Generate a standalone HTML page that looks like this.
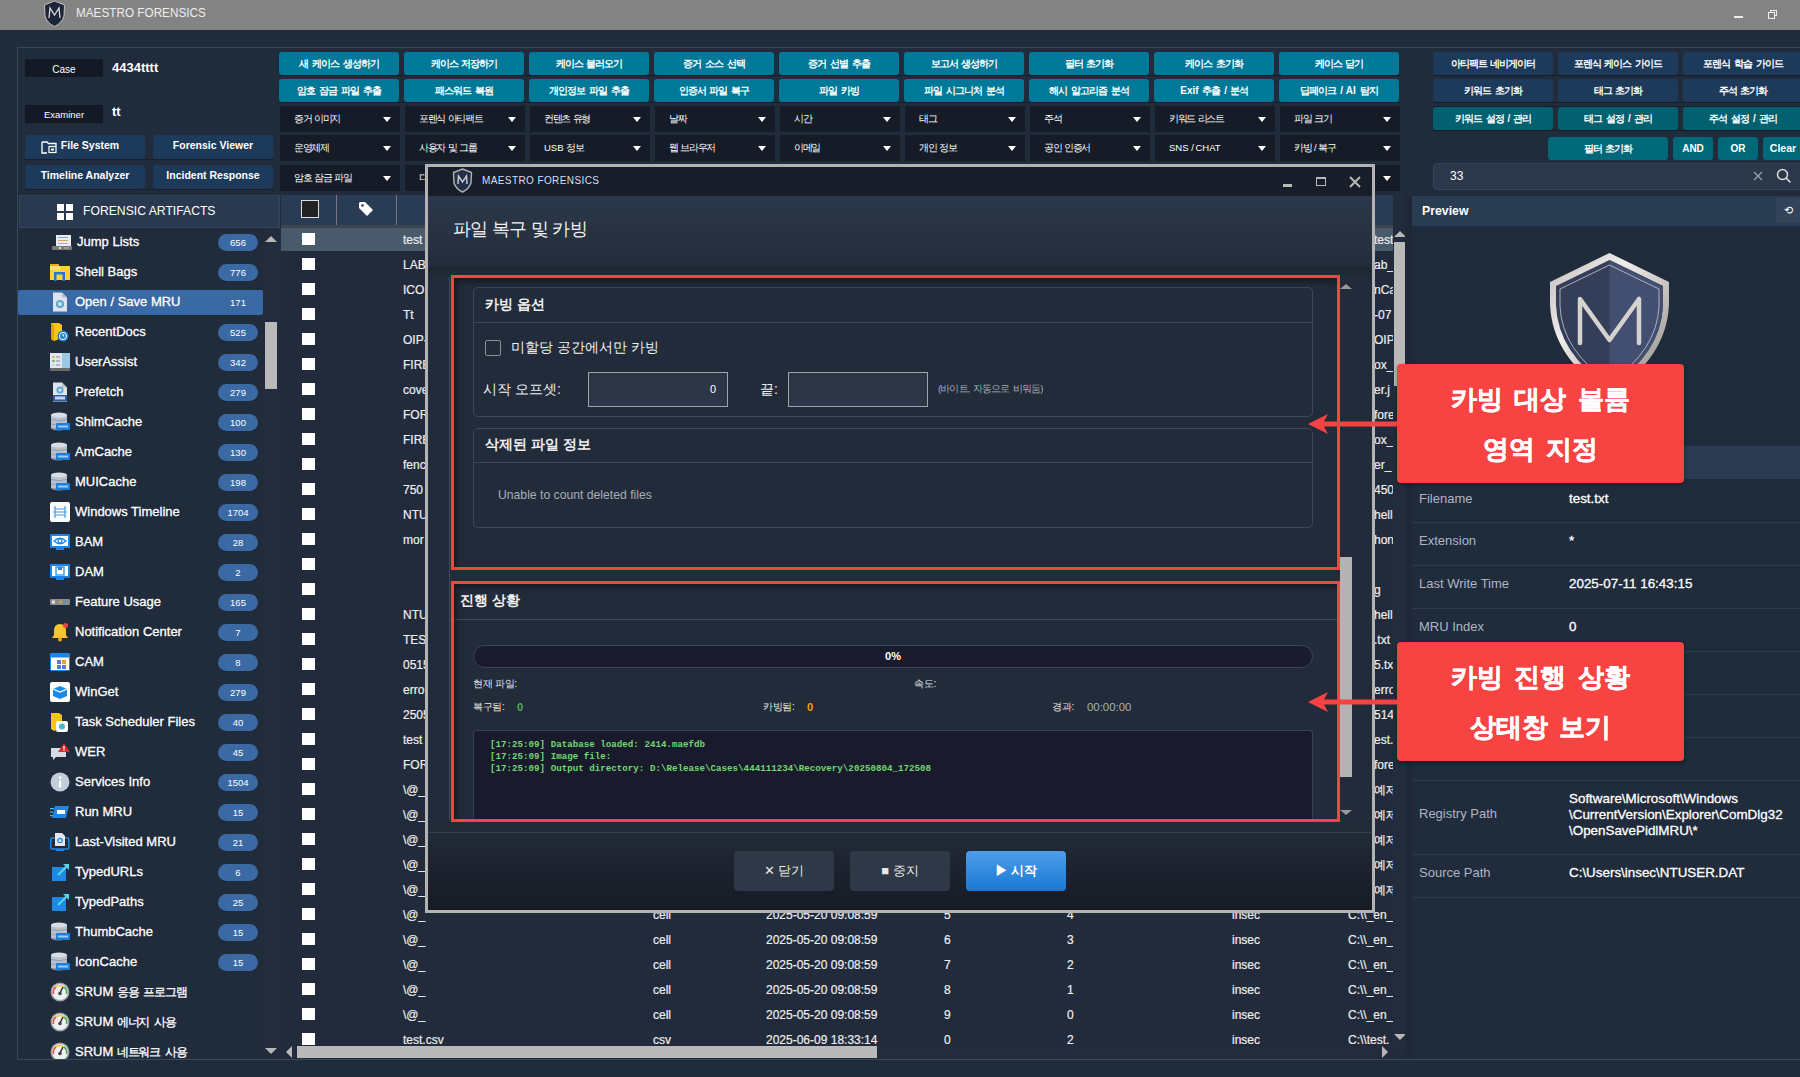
<!DOCTYPE html><html><head><meta charset="utf-8"><style>
*{box-sizing:border-box;margin:0;padding:0}
html,body{width:1800px;height:1077px;overflow:hidden;background:#202b3b;font-family:"Liberation Sans",sans-serif;color:#fff;position:relative}
.a{position:absolute}
.tb{position:absolute;width:120px;height:23px;background:#007999;border-radius:3px;color:#fff;font-weight:bold;font-size:10px;letter-spacing:-1px;word-spacing:2px;text-align:center;line-height:23px;white-space:nowrap}
.nb{background:#1e3a5b}
.db{background:#03606f}
.dd{position:absolute;width:120px;height:26px;background:#151b27;color:#fff;font-size:9.5px;letter-spacing:-1.35px;word-spacing:1.5px;line-height:26px;padding-left:14px;white-space:nowrap}
.dd:after{content:"";position:absolute;right:9px;top:11px;border-left:4px solid transparent;border-right:4px solid transparent;border-top:5px solid #fff}
.it{position:absolute;left:52px;width:215px;height:30px}
.it .ic{position:absolute;left:-2px;top:5px;width:20px;height:20px}
.it .tx{position:absolute;left:23px;top:0;line-height:30px;font-size:13px;color:#fff;white-space:nowrap;-webkit-text-stroke:0.3px #fff}
.it .bd{position:absolute;left:166px;top:7px;width:40px;height:17px;border-radius:9px;background:#3a69a4;color:#fff;font-size:9.5px;text-align:center;line-height:17px}
.row{position:absolute;left:281px;width:1112px;height:25px;font-size:12px;color:#eee;-webkit-text-stroke:0.2px #eee;white-space:nowrap;overflow:hidden}
.row .cb{position:absolute;left:21px;top:5px;width:13px;height:12px;background:#fff}
.row span{position:absolute;top:0;line-height:25px}
.pl{position:absolute;left:1419px;font-size:13px;color:#aeb6c2;white-space:nowrap}
.pv{position:absolute;left:1569px;font-size:13.4px;color:#fff;-webkit-text-stroke:0.3px #fff;white-space:nowrap}
.ps{position:absolute;left:1412px;width:388px;height:1px;background:#2f3a4a}
.grp{position:absolute;border:1px solid #3a4859;border-radius:5px}
.grp .hl{position:absolute;left:0;right:0;height:1px;background:#3a4859}
.kr{font-size:14px;color:#f0f0f0;white-space:nowrap}
.btn{position:absolute;height:40px;width:100px;border-radius:4px;background:#2e3846;font-size:13px;color:#e8e8e8;text-align:center;line-height:40px}
.callout{position:absolute;left:1397px;width:287px;height:119px;background:#f84343;border-radius:4px;box-shadow:0 2px 4px rgba(0,0,0,.35);color:#fff;font-weight:bold;-webkit-text-stroke:0.45px #fff;font-size:26px;text-align:center;word-spacing:4px}
</style></head><body>
<div class="a" style="left:0;top:0;width:1800px;height:30px;background:#838383"></div>
<svg class="a" style="left:43px;top:0" width="23" height="27" viewBox="0 0 23 27"><path d="M11.5 1 L21.5 5 L21 16 Q19 23 11.5 26.5 Q4 23 2 16 L1.5 5 Z" fill="#1b2638" stroke="#c9c4bc" stroke-width="1"/><path d="M6 18 L7 8 L11.5 15 L16 8 L17 18" fill="none" stroke="#d8d8d8" stroke-width="1.3"/></svg>
<div class="a" style="left:76px;top:5px;font-size:12.3px;letter-spacing:0px;transform:scaleX(0.955);transform-origin:0 0;color:#eee;line-height:16px">MAESTRO FORENSICS</div>
<div class="a" style="left:1734px;top:16px;width:9px;height:2px;background:#eee"></div>
<div class="a" style="left:1770px;top:10px;width:7px;height:6px;border:1px solid #eee"></div>
<div class="a" style="left:1768px;top:12px;width:7px;height:7px;border:1px solid #eee;background:#838383"></div>
<div class="a" style="left:17px;top:47px;width:1800px;height:1013px;border:1px solid #38475a"></div>
<div class="a" style="left:25px;top:59px;width:78px;height:18px;background:#131a26;font-size:10px;text-align:center;line-height:21px">Case</div>
<div class="a" style="left:112px;top:59px;font-size:13px;font-weight:bold;line-height:18px">4434tttt</div>
<div class="a" style="left:25px;top:105px;width:78px;height:18px;background:#131a26;font-size:9.5px;text-align:center;line-height:19.5px">Examiner</div>
<div class="a" style="left:112px;top:103px;font-size:13px;font-weight:bold;line-height:18px">tt</div>
<div class="tb nb" style="left:25px;top:135px;height:24px;line-height:21px;letter-spacing:0;word-spacing:0;font-size:10.5px;padding-left:10px;">File System</div>
<div class="tb nb" style="left:153px;top:135px;height:24px;line-height:21px;letter-spacing:0;word-spacing:0;font-size:10.5px;">Forensic Viewer</div>
<div class="tb nb" style="left:25px;top:165px;height:24px;line-height:21px;letter-spacing:0;word-spacing:0;font-size:10.5px;">Timeline Analyzer</div>
<div class="tb nb" style="left:153px;top:165px;height:24px;line-height:21px;letter-spacing:0;word-spacing:0;font-size:10.5px;">Incident Response</div>
<svg class="a" style="left:41px;top:140px" width="16" height="14" viewBox="0 0 16 14"><path d="M1 2 H6 L7.5 3.5 H15 V6" fill="none" stroke="#fff" stroke-width="1.3"/><path d="M1 2 V13 H6" fill="none" stroke="#fff" stroke-width="1.3"/><rect x="8" y="6.5" width="7" height="6" fill="none" stroke="#fff" stroke-width="1.2"/><rect x="10" y="8.5" width="3" height="2" fill="#fff"/></svg>
<div class="a" style="left:25px;top:159px;width:248px;height:1px;background:#181d28"></div>
<div class="a" style="left:25px;top:189px;width:248px;height:1px;background:#181d28"></div>
<div class="a" style="left:279px;top:75px;width:1121px;height:1px;background:#181d28"></div>
<div class="a" style="left:279px;top:102px;width:1121px;height:1px;background:#181d28"></div>
<div class="a" style="left:1433px;top:75px;width:367px;height:1px;background:#181d28"></div>
<div class="a" style="left:1433px;top:102px;width:367px;height:1px;background:#181d28"></div>
<div class="a" style="left:1433px;top:106px;width:367px;height:1px;background:#181d28"></div>
<div class="a" style="left:1433px;top:130px;width:367px;height:1px;background:#181d28"></div>
<div class="a" style="left:19px;top:195px;width:261px;height:33px;background:#293a50;border:1px solid #33455c"></div>
<svg class="a" style="left:57px;top:204px" width="16" height="16"><rect x="0" y="0" width="7" height="7" fill="#fff"/><rect x="9" y="0" width="7" height="7" fill="#fff"/><rect x="0" y="9" width="7" height="7" fill="#fff"/><rect x="9" y="9" width="7" height="7" fill="#fff"/></svg>
<div class="a" style="left:83px;top:203px;font-size:12.2px;line-height:17px">FORENSIC ARTIFACTS</div>
<div class="a" style="left:18px;top:290px;width:245px;height:25px;background:#3a6aa5;border-radius:2px"></div>
<div class="a" style="left:18px;top:229px;width:247px;height:830px;overflow:hidden">
<div class="it jl" style="left:34px;top:-2px"><svg class="ic" style="left:0;top:7px" viewBox="0 0 20 20" width="20" height="20"><rect x="4" y="1" width="15" height="11" fill="#e9ecf2"/><rect x="6" y="3" width="10" height="1" fill="#8ab"/><rect x="6" y="6" width="10" height="1" fill="#e8a060"/><rect x="6" y="9" width="10" height="1" fill="#aab"/><rect x="0" y="12" width="20" height="4" fill="#7a7a7a"/><rect x="7" y="13" width="2" height="2" fill="#ddd"/><rect x="12" y="13.5" width="5" height="1" fill="#bbb"/></svg><style>.jl .tx{left:25px}</style><div class="tx">Jump Lists</div><div class="bd">656</div></div>
<div class="it" style="left:34px;top:28px"><svg class="ic" viewBox="0 0 20 20" width="20" height="20"><rect x="0" y="2" width="9" height="4" fill="#e8b400"/><rect x="0" y="4" width="20" height="14" fill="#fad232"/><rect x="0" y="4" width="10" height="4" fill="#fbe07a"/><path d="M4 19 V10 H15 V19 H12.5 V12.5 H6.5 V19 Z" fill="#1e78e0"/></svg><div class="tx">Shell Bags</div><div class="bd">776</div></div>
<div class="it" style="left:34px;top:58px"><svg class="ic" viewBox="0 0 20 20" width="20" height="20"><path d="M3 0.5 H12 L17 5.5 V19.5 H3 Z" fill="#dfe4ea"/><path d="M12 0.5 V5.5 H17 Z" fill="#b5c0cc"/><circle cx="10" cy="12" r="3" fill="none" stroke="#5aaad8" stroke-width="2.2"/></svg><div class="tx">Open / Save MRU</div><div class="bd">171</div></div>
<div class="it" style="left:34px;top:88px"><svg class="ic" viewBox="0 0 20 20" width="20" height="20"><path d="M1 1 H9 L12 3 V16 L4 19 L1 17 Z" fill="#f5c518"/><path d="M1 1 L4 3 V19 L1 17 Z" fill="#d9a800"/><circle cx="13" cy="14" r="5.5" fill="#1a7fd6"/><circle cx="13" cy="14" r="3.6" fill="none" stroke="#fff" stroke-width="1"/><path d="M13 12 V14 H14.5" stroke="#fff" stroke-width="1" fill="none"/></svg><div class="tx">RecentDocs</div><div class="bd">525</div></div>
<div class="it" style="left:34px;top:118px"><svg class="ic" viewBox="0 0 20 20" width="20" height="20"><rect x="0" y="1" width="20" height="18" fill="#e2e8ef"/><rect x="12" y="1" width="8" height="15" fill="#9ec7e4"/><rect x="0" y="16" width="20" height="3" fill="#6a6a6a"/><rect x="2.5" y="4" width="2" height="2" fill="#f0a020"/><rect x="2.5" y="8" width="2" height="2" fill="#3cb043"/><rect x="2.5" y="12" width="2" height="2" fill="#ccc"/><rect x="6" y="4.5" width="4" height="1" fill="#889"/><rect x="6" y="8.5" width="4" height="1" fill="#889"/><rect x="6" y="12.5" width="4" height="1" fill="#889"/></svg><div class="tx">UserAssist</div><div class="bd">342</div></div>
<div class="it" style="left:34px;top:148px"><svg class="ic" viewBox="0 0 20 20" width="20" height="20"><path d="M3 0.5 H12 L17 5.5 V19.5 H3 Z" fill="#dfe4ea"/><path d="M12 0.5 V5.5 H17 Z" fill="#b5c0cc"/><circle cx="10" cy="8" r="2.6" fill="none" stroke="#5aaad8" stroke-width="2"/><rect x="3" y="13" width="14" height="6" fill="#2a59ad"/><rect x="5" y="14.5" width="10" height="3" fill="#c6d6f2"/></svg><div class="tx">Prefetch</div><div class="bd">279</div></div>
<div class="it" style="left:34px;top:178px"><svg class="ic" viewBox="0 0 20 20" width="20" height="20"><ellipse cx="9" cy="16" rx="8" ry="2.5" fill="#8e94a3"/><rect x="1" y="3" width="16" height="13" fill="#b9bfcc"/><path d="M1 7.5 Q9 10 17 7.5 M1 12 Q9 14.5 17 12" stroke="#8e94a3" stroke-width="0.8" fill="none"/><ellipse cx="9" cy="3" rx="8" ry="2.5" fill="#d9dde6"/><rect x="6" y="11" width="14" height="7" rx="1" fill="#1c7fdc"/><rect x="8" y="13.5" width="10" height="2" fill="#bfe0ff" opacity=".8"/></svg><div class="tx">ShimCache</div><div class="bd">100</div></div>
<div class="it" style="left:34px;top:208px"><svg class="ic" viewBox="0 0 20 20" width="20" height="20"><ellipse cx="9" cy="16" rx="8" ry="2.5" fill="#8e94a3"/><rect x="1" y="3" width="16" height="13" fill="#b9bfcc"/><path d="M1 7.5 Q9 10 17 7.5 M1 12 Q9 14.5 17 12" stroke="#8e94a3" stroke-width="0.8" fill="none"/><ellipse cx="9" cy="3" rx="8" ry="2.5" fill="#d9dde6"/><rect x="6" y="11" width="14" height="7" rx="1" fill="#1c7fdc"/><rect x="8" y="13.5" width="10" height="2" fill="#bfe0ff" opacity=".8"/></svg><div class="tx">AmCache</div><div class="bd">130</div></div>
<div class="it" style="left:34px;top:238px"><svg class="ic" viewBox="0 0 20 20" width="20" height="20"><ellipse cx="9" cy="16" rx="8" ry="2.5" fill="#8e94a3"/><rect x="1" y="3" width="16" height="13" fill="#b9bfcc"/><path d="M1 7.5 Q9 10 17 7.5 M1 12 Q9 14.5 17 12" stroke="#8e94a3" stroke-width="0.8" fill="none"/><ellipse cx="9" cy="3" rx="8" ry="2.5" fill="#d9dde6"/><rect x="6" y="11" width="14" height="7" rx="1" fill="#1c7fdc"/><rect x="8" y="13.5" width="10" height="2" fill="#bfe0ff" opacity=".8"/></svg><div class="tx">MUICache</div><div class="bd">198</div></div>
<div class="it" style="left:34px;top:268px"><svg class="ic" viewBox="0 0 20 20" width="20" height="20"><rect x="0" y="0" width="20" height="20" rx="2" fill="#fdfdfd"/><path d="M5 4 V16 M15 4 V16 M5 7 H15 M5 13 H15 M3 10 H17" stroke="#4a9be0" stroke-width="1.2"/></svg><div class="tx">Windows Timeline</div><div class="bd">1704</div></div>
<div class="it" style="left:34px;top:298px"><svg class="ic" viewBox="0 0 20 20" width="20" height="20"><rect x="0" y="2" width="20" height="14" rx="1" fill="#1c86e8"/><rect x="2" y="4" width="16" height="10" fill="#fff"/><path d="M4 9 Q10 3.5 16 9 Q10 14.5 4 9 Z" fill="none" stroke="#1c86e8" stroke-width="1.2"/><circle cx="10" cy="9" r="2" fill="none" stroke="#1c86e8" stroke-width="1.2"/><rect x="6" y="16" width="8" height="2" fill="#1c86e8"/></svg><div class="tx">BAM</div><div class="bd">28</div></div>
<div class="it" style="left:34px;top:328px"><svg class="ic" viewBox="0 0 20 20" width="20" height="20"><rect x="0" y="2" width="20" height="14" rx="1" fill="#1c86e8"/><rect x="2" y="4" width="16" height="10" fill="#fff"/><rect x="6" y="5" width="8" height="8" fill="none" stroke="#1c86e8" stroke-width="1.2"/><rect x="8" y="5" width="4" height="3" fill="#1c86e8"/><rect x="6" y="16" width="8" height="2" fill="#1c86e8"/></svg><div class="tx">DAM</div><div class="bd">2</div></div>
<div class="it" style="left:34px;top:358px"><svg class="ic" viewBox="0 0 20 20" width="20" height="20"><rect x="0" y="7" width="20" height="6" rx="1" fill="#8a8c90"/><rect x="2" y="8.5" width="3" height="3" fill="#ddd"/><circle cx="11" cy="10" r="1.6" fill="#e8a030"/><circle cx="14" cy="10" r="1.6" fill="#3aa0e0"/></svg><div class="tx">Feature Usage</div><div class="bd">165</div></div>
<div class="it" style="left:34px;top:388px"><svg class="ic" viewBox="0 0 20 20" width="20" height="20"><path d="M10 2 Q16 2 16 9 V13 L18 16 H2 L4 13 V9 Q4 2 10 2 Z" fill="#f8c630"/><circle cx="10" cy="17.5" r="2" fill="#e8a820"/><circle cx="15.5" cy="3.5" r="2.5" fill="#e84545"/></svg><div class="tx">Notification Center</div><div class="bd">7</div></div>
<div class="it" style="left:34px;top:418px"><svg class="ic" viewBox="0 0 20 20" width="20" height="20"><rect x="0.5" y="1.5" width="19" height="17" rx="1" fill="#fff" stroke="#1c86e8" stroke-width="1"/><rect x="0.5" y="1.5" width="19" height="4" fill="#1c86e8"/><rect x="7" y="8" width="4" height="4" fill="#5a7ad8"/><rect x="12" y="8" width="4" height="4" fill="#f39c32"/><rect x="7" y="13" width="4" height="4" fill="#5a7ad8"/><rect x="12" y="13" width="4" height="4" fill="#5a7ad8"/></svg><div class="tx">CAM</div><div class="bd">8</div></div>
<div class="it" style="left:34px;top:448px"><svg class="ic" viewBox="0 0 20 20" width="20" height="20"><rect x="0" y="0" width="20" height="20" rx="2" fill="#fdfdfd"/><path d="M3 7 L10 4 L17 7 L17 14 L10 17 L3 14 Z" fill="#1a8ae8"/><path d="M3 7 L10 10 L17 7" stroke="#fff" stroke-width="1.2" fill="none"/></svg><div class="tx">WinGet</div><div class="bd">279</div></div>
<div class="it" style="left:34px;top:478px"><svg class="ic" viewBox="0 0 20 20" width="20" height="20"><path d="M1 1 H9 L12 3 V16 L4 19 L1 17 Z" fill="#f5c518"/><rect x="6" y="9" width="12" height="11" rx="2" fill="#fff"/><circle cx="12" cy="14.5" r="3" fill="#4ab8c8"/></svg><div class="tx">Task Scheduler Files</div><div class="bd">40</div></div>
<div class="it" style="left:34px;top:508px"><svg class="ic" viewBox="0 0 20 20" width="20" height="20"><path d="M1 6 H16 V15 H6 L3 18 V15 H1 Z" fill="#d6dae2"/><path d="M14 1 L20 10 H8 Z" fill="#d42a2a"/><rect x="13.4" y="4" width="1.2" height="3.5" fill="#fff"/><rect x="13.4" y="8" width="1.2" height="1" fill="#fff"/></svg><div class="tx">WER</div><div class="bd">45</div></div>
<div class="it" style="left:34px;top:538px"><svg class="ic" viewBox="0 0 20 20" width="20" height="20"><circle cx="10" cy="10" r="9.5" fill="#c2cdda"/><rect x="9" y="8.5" width="2.2" height="7" fill="#fff"/><circle cx="10.1" cy="5.5" r="1.3" fill="#fff"/></svg><div class="tx">Services Info</div><div class="bd">1504</div></div>
<div class="it" style="left:34px;top:568px"><svg class="ic" viewBox="0 0 20 20" width="20" height="20"><path d="M5 4 H19 L16 16 H2 Z" fill="#1e88e5"/><rect x="7" y="8" width="8" height="4" fill="#fff"/><rect x="0" y="6" width="4" height="1.2" fill="#3fc0ff"/><rect x="0" y="9.5" width="3" height="1.2" fill="#3fc0ff"/><rect x="0" y="13" width="3" height="1.2" fill="#3fc0ff"/></svg><div class="tx">Run MRU</div><div class="bd">15</div></div>
<div class="it" style="left:34px;top:598px"><svg class="ic" viewBox="0 0 20 20" width="20" height="20"><rect x="0.8" y="6" width="18" height="11" rx="1" fill="none" stroke="#1c86e8" stroke-width="1.5"/><rect x="6" y="17" width="8" height="2" fill="#1c86e8"/><path d="M5 1 H12 L15 4 V14 H5 Z" fill="#e4e8ee"/><circle cx="10" cy="8.5" r="2.2" fill="none" stroke="#1c86e8" stroke-width="1.2"/></svg><div class="tx">Last-Visited MRU</div><div class="bd">21</div></div>
<div class="it" style="left:34px;top:628px"><svg class="ic" viewBox="0 0 20 20" width="20" height="20"><rect x="2" y="5" width="14" height="14" fill="#1e88e5"/><path d="M8 13 L17 4" stroke="#4fd8ec" stroke-width="2.2"/><path d="M13 2 H19 V8 Z" fill="#4fd8ec"/></svg><div class="tx">TypedURLs</div><div class="bd">6</div></div>
<div class="it" style="left:34px;top:658px"><svg class="ic" viewBox="0 0 20 20" width="20" height="20"><rect x="2" y="5" width="14" height="14" fill="#1e88e5"/><path d="M8 13 L17 4" stroke="#4fd8ec" stroke-width="2.2"/><path d="M13 2 H19 V8 Z" fill="#4fd8ec"/></svg><div class="tx">TypedPaths</div><div class="bd">25</div></div>
<div class="it" style="left:34px;top:688px"><svg class="ic" viewBox="0 0 20 20" width="20" height="20"><ellipse cx="9" cy="16" rx="8" ry="2.5" fill="#8e94a3"/><rect x="1" y="3" width="16" height="13" fill="#b9bfcc"/><path d="M1 7.5 Q9 10 17 7.5 M1 12 Q9 14.5 17 12" stroke="#8e94a3" stroke-width="0.8" fill="none"/><ellipse cx="9" cy="3" rx="8" ry="2.5" fill="#d9dde6"/><rect x="6" y="11" width="14" height="7" rx="1" fill="#1c7fdc"/><rect x="8" y="13.5" width="10" height="2" fill="#bfe0ff" opacity=".8"/></svg><div class="tx">ThumbCache</div><div class="bd">15</div></div>
<div class="it" style="left:34px;top:718px"><svg class="ic" viewBox="0 0 20 20" width="20" height="20"><ellipse cx="9" cy="16" rx="8" ry="2.5" fill="#8e94a3"/><rect x="1" y="3" width="16" height="13" fill="#b9bfcc"/><path d="M1 7.5 Q9 10 17 7.5 M1 12 Q9 14.5 17 12" stroke="#8e94a3" stroke-width="0.8" fill="none"/><ellipse cx="9" cy="3" rx="8" ry="2.5" fill="#d9dde6"/><rect x="6" y="11" width="14" height="7" rx="1" fill="#1c7fdc"/><rect x="8" y="13.5" width="10" height="2" fill="#bfe0ff" opacity=".8"/></svg><div class="tx">IconCache</div><div class="bd">15</div></div>
<div class="it" style="left:34px;top:748px"><svg class="ic" viewBox="0 0 20 20" width="20" height="20"><circle cx="10" cy="10" r="9.5" fill="#9aa0a6"/><circle cx="10" cy="10" r="8" fill="#eef0f2"/><path d="M3.5 12 A6.8 6.8 0 0 1 6 5" stroke="#e8553b" stroke-width="1.6" fill="none"/><path d="M6 5 A6.8 6.8 0 0 1 14 5" stroke="#f4c430" stroke-width="1.6" fill="none"/><path d="M14 5 A6.8 6.8 0 0 1 16.5 12" stroke="#4caf50" stroke-width="1.6" fill="none"/><path d="M10 11 L13 5" stroke="#333" stroke-width="1.6"/><circle cx="10" cy="11.5" r="1.8" fill="#445"/></svg><div class="tx">SRUM <span style="font-size:12px;letter-spacing:-1.2px;word-spacing:2.5px">응용 프로그램</span></div></div>
<div class="it" style="left:34px;top:778px"><svg class="ic" viewBox="0 0 20 20" width="20" height="20"><circle cx="10" cy="10" r="9.5" fill="#9aa0a6"/><circle cx="10" cy="10" r="8" fill="#eef0f2"/><path d="M3.5 12 A6.8 6.8 0 0 1 6 5" stroke="#e8553b" stroke-width="1.6" fill="none"/><path d="M6 5 A6.8 6.8 0 0 1 14 5" stroke="#f4c430" stroke-width="1.6" fill="none"/><path d="M14 5 A6.8 6.8 0 0 1 16.5 12" stroke="#4caf50" stroke-width="1.6" fill="none"/><path d="M10 11 L13 5" stroke="#333" stroke-width="1.6"/><circle cx="10" cy="11.5" r="1.8" fill="#445"/></svg><div class="tx">SRUM <span style="font-size:12px;letter-spacing:-1.2px;word-spacing:2.5px">에너지 사용</span></div></div>
<div class="it" style="left:34px;top:808px"><svg class="ic" viewBox="0 0 20 20" width="20" height="20"><circle cx="10" cy="10" r="9.5" fill="#9aa0a6"/><circle cx="10" cy="10" r="8" fill="#eef0f2"/><path d="M3.5 12 A6.8 6.8 0 0 1 6 5" stroke="#e8553b" stroke-width="1.6" fill="none"/><path d="M6 5 A6.8 6.8 0 0 1 14 5" stroke="#f4c430" stroke-width="1.6" fill="none"/><path d="M14 5 A6.8 6.8 0 0 1 16.5 12" stroke="#4caf50" stroke-width="1.6" fill="none"/><path d="M10 11 L13 5" stroke="#333" stroke-width="1.6"/><circle cx="10" cy="11.5" r="1.8" fill="#445"/></svg><div class="tx">SRUM <span style="font-size:12px;letter-spacing:-1.2px;word-spacing:2.5px">네트워크 사용</span></div></div>
</div>
<div class="a" style="left:263px;top:229px;width:18px;height:830px;background:#222c3c"></div>
<div class="a" style="left:265px;top:236px;width:0;height:0;border-left:6px solid transparent;border-right:6px solid transparent;border-bottom:6px solid #b8b8b8"></div>
<div class="a" style="left:265px;top:322px;width:12px;height:67px;background:#b9b9b9"></div>
<div class="a" style="left:265px;top:1048px;width:0;height:0;border-left:6px solid transparent;border-right:6px solid transparent;border-top:6px solid #b8b8b8"></div>
<div class="tb" style="left:279px;top:52px">새 케이스 생성하기</div>
<div class="tb" style="left:279px;top:79px">암호 잠금 파일 추출</div>
<div class="dd" style="left:280px;top:106px">증거 이미지</div>
<div class="dd" style="left:280px;top:135px">운영체제</div>
<div class="dd" style="left:280px;top:165px">암호 잠금 파일</div>
<div class="tb" style="left:404px;top:52px">케이스 저장하기</div>
<div class="tb" style="left:404px;top:79px">패스워드 복원</div>
<div class="dd" style="left:405px;top:106px">포렌식 아티팩트</div>
<div class="dd" style="left:405px;top:135px">사용자 및 그룹</div>
<div class="dd" style="left:405px;top:165px">디</div>
<div class="tb" style="left:529px;top:52px">케이스 불러오기</div>
<div class="tb" style="left:529px;top:79px">개인정보 파일 추출</div>
<div class="dd" style="left:530px;top:106px">컨텐츠 유형</div>
<div class="dd" style="left:530px;top:135px"><span style="letter-spacing:0;word-spacing:0">USB</span> 정보</div>
<div class="dd" style="left:530px;top:165px"></div>
<div class="tb" style="left:654px;top:52px">증거 소스 선택</div>
<div class="tb" style="left:654px;top:79px">인증서 파일 복구</div>
<div class="dd" style="left:655px;top:106px">날짜</div>
<div class="dd" style="left:655px;top:135px">웹 브라우저</div>
<div class="dd" style="left:655px;top:165px"></div>
<div class="tb" style="left:779px;top:52px">증거 선별 추출</div>
<div class="tb" style="left:779px;top:79px">파일 카빙</div>
<div class="dd" style="left:780px;top:106px">시간</div>
<div class="dd" style="left:780px;top:135px">이메일</div>
<div class="dd" style="left:780px;top:165px"></div>
<div class="tb" style="left:904px;top:52px">보고서 생성하기</div>
<div class="tb" style="left:904px;top:79px">파일 시그니처 분석</div>
<div class="dd" style="left:905px;top:106px">태그</div>
<div class="dd" style="left:905px;top:135px">개인 정보</div>
<div class="dd" style="left:905px;top:165px"></div>
<div class="tb" style="left:1029px;top:52px">필터 초기화</div>
<div class="tb" style="left:1029px;top:79px">해시 알고리즘 분석</div>
<div class="dd" style="left:1030px;top:106px">주석</div>
<div class="dd" style="left:1030px;top:135px">공인 인증서</div>
<div class="dd" style="left:1030px;top:165px"></div>
<div class="tb" style="left:1154px;top:52px">케이스 초기화</div>
<div class="tb" style="left:1154px;top:79px"><span style="letter-spacing:0;word-spacing:0">Exif</span> 추출 / 분석</div>
<div class="dd" style="left:1155px;top:106px">키워드 리스트</div>
<div class="dd" style="left:1155px;top:135px"><span style="letter-spacing:0;word-spacing:0">SNS</span> / <span style="letter-spacing:0;word-spacing:0">CHAT</span></div>
<div class="dd" style="left:1155px;top:165px"></div>
<div class="tb" style="left:1279px;top:52px">케이스 닫기</div>
<div class="tb" style="left:1279px;top:79px">딥페이크 / <span style="letter-spacing:0;word-spacing:0">AI</span> 탐지</div>
<div class="dd" style="left:1280px;top:106px">파일 크기</div>
<div class="dd" style="left:1280px;top:135px">카빙 / 복구</div>
<div class="dd" style="left:1280px;top:165px"></div>
<div class="tb nb" style="left:1433px;top:52px">아티팩트 네비게이터</div>
<div class="tb nb" style="left:1558px;top:52px">포렌식 케이스 가이드</div>
<div class="tb nb" style="left:1683px;top:52px">포렌식 학습 가이드</div>
<div class="tb nb" style="left:1433px;top:79px">키워드 초기화</div>
<div class="tb nb" style="left:1558px;top:79px">태그 초기화</div>
<div class="tb nb" style="left:1683px;top:79px">주석 초기화</div>
<div class="tb db" style="left:1433px;top:107px">키워드 설정 / 관리</div>
<div class="tb db" style="left:1558px;top:107px">태그 설정 / 관리</div>
<div class="tb db" style="left:1683px;top:107px">주석 설정 / 관리</div>
<div class="tb db" style="left:1548px;top:137px;background:#006878">필터 초기화</div>
<div class="tb db" style="left:1673px;top:137px;width:40px;background:#006878;letter-spacing:0;word-spacing:0;font-size:10px">AND</div>
<div class="tb db" style="left:1718px;top:137px;width:40px;background:#006878;letter-spacing:0;word-spacing:0;font-size:10px">OR</div>
<div class="tb db" style="left:1763px;top:137px;width:40px;background:#006878;letter-spacing:0;word-spacing:0;font-size:10.5px">Clear</div>
<div class="a" style="left:1433px;top:163px;width:380px;height:27px;background:#2c384a;border:1px solid #36435a;border-radius:4px"></div>
<div class="a" style="left:1450px;top:168px;font-size:12px;line-height:16px">33</div>
<svg class="a" style="left:1753px;top:171px" width="10" height="10"><path d="M1 1 L9 9 M9 1 L1 9" stroke="#9aa3ad" stroke-width="1.3"/></svg>
<svg class="a" style="left:1776px;top:168px" width="16" height="16"><circle cx="6.5" cy="6.5" r="5" fill="none" stroke="#ddd" stroke-width="1.5"/><line x1="10" y1="10" x2="14.5" y2="14.5" stroke="#ddd" stroke-width="1.6"/></svg>
<div class="a" style="left:281px;top:195px;width:1112px;height:30px;background:#2a3c53"></div>
<div class="a" style="left:301px;top:200px;width:18px;height:18px;background:#222;border:1px solid #ddd"></div>
<div class="a" style="left:336px;top:195px;width:1px;height:33px;background:#778"></div>
<div class="a" style="left:396px;top:195px;width:1px;height:33px;background:#778"></div>
<svg class="a" style="left:358px;top:201px" width="16" height="16"><path d="M1 2 L1 7 L9 15 L15 9 L7 1 L2 1 Z" fill="#fff"/><circle cx="4.5" cy="4.5" r="1.3" fill="#2a3c53"/></svg>
<div class="a" style="left:281px;top:228px;width:1112px;height:830px;background:#212b3b"></div>
<div class="a" style="left:281px;top:225px;width:1112px;height:3px;background:#3b4451"></div><div class="a" style="left:281px;top:228px;width:1112px;height:23px;background:#4a5a6d"></div>
<div class="row" style="top:228px"><div class="cb"></div><span style="left:122px">test</span><span style="left:1093px">test</span></div>
<div class="row" style="top:253px"><div class="cb"></div><span style="left:122px">LAB</span><span style="left:1093px">ab_</span></div>
<div class="row" style="top:278px"><div class="cb"></div><span style="left:122px">ICO</span><span style="left:1093px">nCa</span></div>
<div class="row" style="top:303px"><div class="cb"></div><span style="left:122px">Tt</span><span style="left:1093px">-07</span></div>
<div class="row" style="top:328px"><div class="cb"></div><span style="left:122px">OIP-</span><span style="left:1093px">OIP.j</span></div>
<div class="row" style="top:353px"><div class="cb"></div><span style="left:122px">FIRE</span><span style="left:1093px">ox_t</span></div>
<div class="row" style="top:378px"><div class="cb"></div><span style="left:122px">cove</span><span style="left:1093px">er.j</span></div>
<div class="row" style="top:403px"><div class="cb"></div><span style="left:122px">FOR</span><span style="left:1093px">fore</span></div>
<div class="row" style="top:428px"><div class="cb"></div><span style="left:122px">FIRE</span><span style="left:1093px">ox_t</span></div>
<div class="row" style="top:453px"><div class="cb"></div><span style="left:122px">fenc</span><span style="left:1093px">er_</span></div>
<div class="row" style="top:478px"><div class="cb"></div><span style="left:122px">750</span><span style="left:1093px">450</span></div>
<div class="row" style="top:503px"><div class="cb"></div><span style="left:122px">NTU</span><span style="left:1093px">hell</span></div>
<div class="row" style="top:528px"><div class="cb"></div><span style="left:122px">mor</span><span style="left:1093px">hon</span></div>
<div class="row" style="top:553px"><div class="cb"></div><span style="left:122px"></span><span style="left:1093px"></span></div>
<div class="row" style="top:578px"><div class="cb"></div><span style="left:122px"></span><span style="left:1093px">g</span></div>
<div class="row" style="top:603px"><div class="cb"></div><span style="left:122px">NTU</span><span style="left:1093px">hell</span></div>
<div class="row" style="top:628px"><div class="cb"></div><span style="left:122px">TES</span><span style="left:1093px">.txt</span></div>
<div class="row" style="top:653px"><div class="cb"></div><span style="left:122px">0515</span><span style="left:1093px">5.tx</span></div>
<div class="row" style="top:678px"><div class="cb"></div><span style="left:122px">erro</span><span style="left:1093px">erro</span></div>
<div class="row" style="top:703px"><div class="cb"></div><span style="left:122px">2505</span><span style="left:1093px">514</span></div>
<div class="row" style="top:728px"><div class="cb"></div><span style="left:122px">test</span><span style="left:1093px">est.</span></div>
<div class="row" style="top:753px"><div class="cb"></div><span style="left:122px">FOR</span><span style="left:1093px">fore</span></div>
<div class="row" style="top:778px"><div class="cb"></div><span style="left:122px">\@_</span><span style="left:1093px">예제</span></div>
<div class="row" style="top:803px"><div class="cb"></div><span style="left:122px">\@_</span><span style="left:1093px">예제</span></div>
<div class="row" style="top:828px"><div class="cb"></div><span style="left:122px">\@_</span><span style="left:1093px">예제</span></div>
<div class="row" style="top:853px"><div class="cb"></div><span style="left:122px">\@_</span><span style="left:1093px">예제</span></div>
<div class="row" style="top:878px"><div class="cb"></div><span style="left:122px">\@_</span><span style="left:1093px">예제</span></div>
<div class="row" style="top:903px"><div class="cb"></div><span style="left:122px">\@_</span><span style="left:372px">cell</span><span style="left:485px">2025-05-20 09:08:59</span><span style="left:663px">5</span><span style="left:786px">4</span><span style="left:951px">insec</span><span style="left:1067px">C:\\_en_</span></div>
<div class="row" style="top:928px"><div class="cb"></div><span style="left:122px">\@_</span><span style="left:372px">cell</span><span style="left:485px">2025-05-20 09:08:59</span><span style="left:663px">6</span><span style="left:786px">3</span><span style="left:951px">insec</span><span style="left:1067px">C:\\_en_</span></div>
<div class="row" style="top:953px"><div class="cb"></div><span style="left:122px">\@_</span><span style="left:372px">cell</span><span style="left:485px">2025-05-20 09:08:59</span><span style="left:663px">7</span><span style="left:786px">2</span><span style="left:951px">insec</span><span style="left:1067px">C:\\_en_</span></div>
<div class="row" style="top:978px"><div class="cb"></div><span style="left:122px">\@_</span><span style="left:372px">cell</span><span style="left:485px">2025-05-20 09:08:59</span><span style="left:663px">8</span><span style="left:786px">1</span><span style="left:951px">insec</span><span style="left:1067px">C:\\_en_</span></div>
<div class="row" style="top:1003px"><div class="cb"></div><span style="left:122px">\@_</span><span style="left:372px">cell</span><span style="left:485px">2025-05-20 09:08:59</span><span style="left:663px">9</span><span style="left:786px">0</span><span style="left:951px">insec</span><span style="left:1067px">C:\\_en_</span></div>
<div class="row" style="top:1028px"><div class="cb"></div><span style="left:122px">test.csv</span><span style="left:372px">csv</span><span style="left:485px">2025-06-09 18:33:14</span><span style="left:663px">0</span><span style="left:786px">2</span><span style="left:951px">insec</span><span style="left:1067px">C:\\test.</span></div>
<div class="a" style="left:1394px;top:228px;width:12px;height:820px;background:#222c3c"></div>
<div class="a" style="left:1394px;top:231px;width:0;height:0;border-left:6px solid transparent;border-right:6px solid transparent;border-bottom:6px solid #b8b8b8"></div>
<div class="a" style="left:1394px;top:242px;width:11px;height:144px;background:#b9b9b9"></div>
<div class="a" style="left:1394px;top:1034px;width:0;height:0;border-left:6px solid transparent;border-right:6px solid transparent;border-top:6px solid #b8b8b8"></div>
<div class="a" style="left:281px;top:1046px;width:1112px;height:13px;background:#222c3c"></div>
<div class="a" style="left:297px;top:1046px;width:580px;height:12px;background:#b9b9b9"></div>
<div class="a" style="left:286px;top:1046px;width:0;height:0;border-top:6px solid transparent;border-bottom:6px solid transparent;border-right:6px solid #b8b8b8"></div>
<div class="a" style="left:1382px;top:1046px;width:0;height:0;border-top:6px solid transparent;border-bottom:6px solid transparent;border-left:6px solid #b8b8b8"></div>
<div class="a" style="left:1405px;top:195px;width:7px;height:864px;background:#1f2837"></div>
<div class="a" style="left:1412px;top:196px;width:388px;height:30px;background:#2a3c52"></div>
<div class="a" style="left:1422px;top:203px;font-size:12.3px;font-weight:bold;line-height:16px">Preview</div>
<div class="a" style="left:1776px;top:198px;width:24px;height:25px;background:#33435a;border-radius:3px;font-size:11px;text-align:center;line-height:25px">&#x27F2;</div>
<svg class="a" style="left:1548px;top:252px" width="124" height="145" viewBox="0 0 124 145"><defs><linearGradient id="sg" x1="0" y1="0" x2="1" y2="1"><stop offset="0" stop-color="#bdb9b6"/><stop offset=".35" stop-color="#f0eeec"/><stop offset=".7" stop-color="#b8b4b0"/><stop offset="1" stop-color="#8c8884"/></linearGradient></defs><path d="M61.5 1 L121 30 L121 52 Q119 106 61.5 142 Q4 106 2 52 L2 30 Z" fill="url(#sg)"/><path d="M61.5 8 L115 34 L115 53 Q113 102 61.5 135 Q10 102 8 53 L8 34 Z" fill="#343e58"/><path d="M61.5 8 L115 34 L115 53 Q113 102 61.5 135 Z" fill="#434f70"/><path d="M61.5 13 L111 37 L111 54 Q109 99 61.5 130 Q14 99 12 54 L12 37 Z" fill="none" stroke="#b8bcc8" stroke-width="0.9"/><path d="M32 91 V47 L61.5 88 L91 47 V91" fill="none" stroke="#d6d2cf" stroke-width="4.5" stroke-linecap="round" stroke-linejoin="round"/></svg>
<div class="a" style="left:1412px;top:446px;width:388px;height:33px;background:#2a3b52"></div>
<div class="pl" style="top:491px;line-height:16px">Filename</div><div class="pv" style="top:491px;line-height:16px">test.txt</div>
<div class="pl" style="top:533px;line-height:16px">Extension</div><div class="pv" style="top:533px;line-height:16px">*</div>
<div class="pl" style="top:576px;line-height:16px">Last Write Time</div><div class="pv" style="top:576px;line-height:16px">2025-07-11 16:43:15</div>
<div class="pl" style="top:619px;line-height:16px">MRU Index</div><div class="pv" style="top:619px;line-height:16px">0</div>
<div class="ps" style="top:522px"></div>
<div class="ps" style="top:565px"></div>
<div class="ps" style="top:608px"></div>
<div class="ps" style="top:651px"></div>
<div class="ps" style="top:694px"></div>
<div class="ps" style="top:737px"></div>
<div class="ps" style="top:780px"></div>
<div class="ps" style="top:854px"></div>
<div class="ps" style="top:897px"></div>
<div class="pl" style="top:806px;line-height:16px">Registry Path</div>
<div class="pv" style="top:791px;line-height:16px">Software\Microsoft\Windows<br>\CurrentVersion\Explorer\ComDlg32<br>\OpenSavePidlMRU\*</div>
<div class="pl" style="top:865px;line-height:16px">Source Path</div><div class="pv" style="top:865px;line-height:16px">C:\Users\insec\NTUSER.DAT</div>
<div class="a" style="left:1412px;top:1059px;width:388px;height:1px;background:#38475a"></div>
<div class="a" style="left:425px;top:164px;width:950px;height:749px;border:3px solid #b3b3b3;background:#222b3a"></div>
<div class="a" style="left:428px;top:167px;width:944px;height:29px;background:#171d29"></div>
<svg class="a" style="left:452px;top:168px" width="21" height="25" viewBox="0 0 21 25"><path d="M10.5 1 L19.5 4.5 L19 15 Q17 21 10.5 24 Q4 21 2 15 L1.5 4.5 Z" fill="#223048" stroke="#b5b1ad" stroke-width="1.4"/><path d="M6 16 L6.5 8 L10.5 14 L14.5 8 L15 16" fill="none" stroke="#c8c8cc" stroke-width="1.5"/></svg>
<div class="a" style="left:482px;top:174px;font-size:10px;letter-spacing:0.4px;color:#dde;line-height:14px">MAESTRO FORENSICS</div>
<div class="a" style="left:1283px;top:184px;width:9px;height:3px;background:#b8b8b8"></div>
<div class="a" style="left:1316px;top:177px;width:10px;height:9px;border:1px solid #b8b8b8;border-top-width:2px"></div>
<svg class="a" style="left:1349px;top:176px" width="12" height="12"><path d="M1 1 L11 11 M11 1 L1 11" stroke="#b8b8b8" stroke-width="2"/></svg>
<div class="a" style="left:428px;top:196px;width:944px;height:71px;background:linear-gradient(#2c384a,#232c3b)"></div><div class="a" style="left:428px;top:267px;width:944px;height:10px;background:linear-gradient(#1f2633,#222b3a)"></div>
<div class="a kr" style="left:453px;top:217px;font-size:18px;letter-spacing:-0.7px;line-height:24px">파일 복구 및 카빙</div>
<div class="a" style="left:449px;top:277px;width:1px;height:543px;background:#3f4b5c"></div>
<div class="grp" style="left:473px;top:287px;width:840px;height:130px"><div class="hl" style="top:34px"></div></div>
<div class="a kr" style="left:485px;top:294px;font-weight:bold;line-height:20px">카빙 옵션</div>
<div class="a" style="left:485px;top:340px;width:16px;height:16px;border:1px solid #8a8f98;border-radius:2px"></div>
<div class="a kr" style="left:511px;top:337px;line-height:20px">미할당 공간에서만 카빙</div>
<div class="a kr" style="left:483px;top:379px;line-height:20px">시작 오프셋:</div>
<div class="a" style="left:588px;top:372px;width:140px;height:35px;background:#2c3646;border:1px solid #a0a4aa"></div>
<div class="a" style="left:710px;top:382px;font-size:11px;line-height:14px">0</div>
<div class="a kr" style="left:760px;top:379px;line-height:20px">끝:</div>
<div class="a" style="left:788px;top:372px;width:140px;height:35px;background:#2c3646;border:1px solid #a0a4aa"></div>
<div class="a" style="left:938px;top:382px;font-size:9.5px;letter-spacing:-0.85px;word-spacing:1.5px;color:#a8afb8;line-height:14px">(바이트, 자동으로 비워둠)</div>
<div class="grp" style="left:473px;top:428px;width:840px;height:100px"><div class="hl" style="top:33px"></div></div>
<div class="a kr" style="left:485px;top:434px;font-weight:bold;line-height:20px">삭제된 파일 정보</div>
<div class="a" style="left:498px;top:488px;font-size:12.2px;color:#a8afb8;line-height:15px">Unable to count deleted files</div>
<div class="grp" style="left:449px;top:582px;width:890px;height:238px;border-right:none;border-bottom:none;border-left:none"><div class="hl" style="top:36px"></div></div>
<div class="a kr" style="left:460px;top:590px;font-weight:bold;line-height:20px">진행 상황</div>
<div class="a" style="left:473px;top:645px;width:840px;height:23px;background:#1b1b2e;border:1px solid #39475a;border-radius:12px;text-align:center;font-size:11px;font-weight:bold;line-height:21px">0%</div>
<div class="a" style="left:473px;top:677px;font-size:10px;letter-spacing:-0.3px;color:#e8e8e8;line-height:14px">현재 파일:</div>
<div class="a" style="left:914px;top:677px;font-size:10px;letter-spacing:-0.3px;color:#e8e8e8;line-height:14px">속도:</div>
<div class="a" style="left:473px;top:700px;font-size:10px;letter-spacing:-0.3px;color:#e8e8e8;line-height:14px">복구됨:</div>
<div class="a" style="left:517px;top:700px;font-size:11px;color:#4caf50;font-weight:bold;line-height:14px">0</div>
<div class="a" style="left:763px;top:700px;font-size:10px;letter-spacing:-0.3px;color:#e8e8e8;line-height:14px">카빙됨:</div>
<div class="a" style="left:807px;top:700px;font-size:11px;color:#ff9800;font-weight:bold;line-height:14px">0</div>
<div class="a" style="left:1052px;top:700px;font-size:10px;letter-spacing:-0.3px;color:#e8e8e8;line-height:14px">경과:</div>
<div class="a" style="left:1087px;top:700px;font-size:11.4px;color:#a8afb8;line-height:14px">00:00:00</div>
<div class="a" style="left:473px;top:730px;width:840px;height:91px;background:#1a1a2d;border:1px solid #36435a;border-bottom:none;border-radius:4px 4px 0 0"></div>
<div class="a" style="left:490px;top:739px;font-family:'Liberation Mono',monospace;font-size:9.2px;font-weight:bold;color:#6fd86f;line-height:12px;white-space:pre">[17:25:09] Database loaded: 2414.maefdb
[17:25:09] Image file:
[17:25:09] Output directory: D:\Release\Cases\444111234\Recovery\20250804_172508</div>
<div class="a" style="left:428px;top:826px;width:944px;height:84px;background:linear-gradient(#232c39,#161b25)"></div>
<div class="a" style="left:428px;top:832px;width:944px;height:1px;background:#333e4c"></div>
<div class="a" style="left:1340px;top:284px;width:0;height:0;border-left:6px solid transparent;border-right:6px solid transparent;border-bottom:5px solid #9a9a9a"></div>
<div class="a" style="left:1340px;top:557px;width:12px;height:220px;background:#b3b3b3"></div>
<div class="a" style="left:1340px;top:810px;width:0;height:0;border-left:6px solid transparent;border-right:6px solid transparent;border-top:5px solid #9a9a9a"></div>
<div class="btn" style="left:734px;top:851px">&#x2715; 닫기</div>
<div class="btn" style="left:850px;top:851px">&#x25A0; 중지</div>
<div class="btn" style="left:966px;top:851px;background:linear-gradient(#4d9de9,#1a78d5);color:#fff;font-weight:bold">&#x25B6; 시작</div>
<div class="a" style="left:451px;top:275px;width:889px;height:295px;border:3px solid #f84343;box-shadow:inset 3px 4px 6px -1px rgba(0,0,0,.45)"></div>
<div class="a" style="left:451px;top:581px;width:889px;height:241px;border:3px solid #f84343;box-shadow:inset 3px 4px 6px -1px rgba(0,0,0,.45)"></div>
<div class="callout" style="top:364px;line-height:50px;padding-top:10px">카빙 대상 볼륨<br>영역 지정</div>
<div class="callout" style="top:642px;line-height:50px;padding-top:10px">카빙 진행 상황<br>상태창 보기</div>
<svg class="a" style="left:1306px;top:412px" width="92" height="24" viewBox="0 0 92 24"><path d="M2 12 L22 2 L18 9.5 H92 V14.5 H18 L22 22 Z" fill="#f54343"/></svg>
<svg class="a" style="left:1306px;top:690px" width="92" height="24" viewBox="0 0 92 24"><path d="M2 12 L22 2 L18 9.5 H92 V14.5 H18 L22 22 Z" fill="#f54343"/></svg>
</body></html>
